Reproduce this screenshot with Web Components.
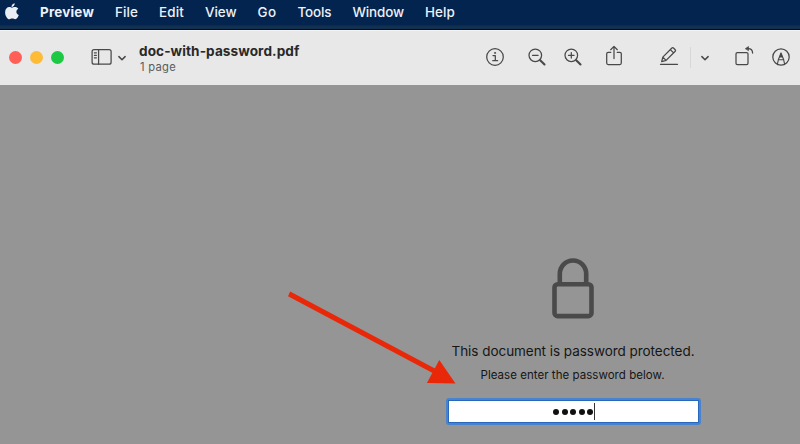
<!DOCTYPE html>
<html lang="en">
<head>
<meta charset="utf-8">
<title>Preview</title>
<style>
html,body{margin:0;height:100%;overflow:hidden;background:#959595;font-family:Inter,"Liberation Sans",sans-serif}
</style>
</head>
<body>
<preview-app></preview-app>
<script>
const define = (name, html, ready) => customElements.define(name, class extends HTMLElement {
  connectedCallback() {
    if (this.shadowRoot) return;
    const t = document.createElement('template');
    t.innerHTML = html;
    this.attachShadow({mode: 'open'}).append(t.content.cloneNode(true));
    if (ready) ready.call(this);
  }
});

/* A single-line label whose tracking is adjusted to fill the given width. */
define('fit-label', `<style>
:host{display:block;white-space:pre}
span{display:inline-block}
</style><span><slot></slot></span>`, function () {
  const w = parseFloat(this.getAttribute('w'));
  const span = this.shadowRoot.querySelector('span');
  this.style.width = w + 'px';
  const natural = span.getBoundingClientRect().width;
  span.style.letterSpacing = ((w - natural) / this.textContent.length) + 'px';
});

define('menu-bar', `<style>
:host{display:flex;box-sizing:border-box;height:30px;padding:0 0 5px 5px;background:linear-gradient(#03244f 0 25px,#12304f 26px 28.5px,#050a1c 29px 30px);color:#eef1f6;font-size:13.4px;font-weight:500;line-height:24px}
svg{width:14px;height:17px;margin:3px 21px 0 0;fill:#e9edf4}
nav{display:flex;gap:21px}
.app{font-weight:700}
</style>
<svg viewBox="0 0 14 17"><path d="M9.700.2c.2 2-1.400 3.700-3.200 3.700C6.300 2.100 7.800.400 9.700.200ZM6.900 4.700C7.700 4.700 8.500 4 9.900 4c1.500 0 2.700.7 3.400 1.700-2.900 1.700-2.300 5.200.5 6.300-.5 1.500-1.900 4.200-3.600 4.200-1.100 0-1.600-.7-2.900-.7s-1.900.7-2.900.7C2.300 16.200.1 12.600.1 9.400c0-3.400 2-5.300 4.200-5.300 1.200 0 2 .6 2.600.6Z"/></svg>
<nav>
<fit-label class="app" w="54">Preview</fit-label>
<fit-label w="23">File</fit-label>
<fit-label w="25">Edit</fit-label>
<fit-label w="31.500">View</fit-label>
<fit-label w="19">Go</fit-label>
<fit-label w="34">Tools</fit-label>
<fit-label w="51.500">Window</fit-label>
<fit-label w="30">Help</fit-label>
</nav>`);

const icons = {
  sidebar: [22, 18, '<rect x="1.100" y="1.600" width="19" height="14.600" rx="2"/><path d="M7.600 1.600v14.600M3.400 4.800h2M3.400 7.300h2M3.400 9.800h2"/>'],
  chevron: [10, 8, '<path stroke-width="1.500" d="m1.900 2.600 3.100 3.100 3.100-3.100"/>'],
  info: [20, 20, '<circle cx="10" cy="10" r="8.300"/><path d="M8 8.600h2.300v5M7.800 13.700h4.800"/><circle cx="10" cy="5.900" r=".6" fill="currentColor" stroke-width=".7"/>'],
  minus: [20, 20, '<circle cx="8.300" cy="8.300" r="6.300"/><path d="M5.500 8.300h5.600"/><path stroke-width="2.100" d="m13.200 13.200 4.300 4.300"/>'],
  plus: [20, 20, '<circle cx="8.300" cy="8.300" r="6.300"/><path d="M5.500 8.300h5.600M8.300 5.500v5.600"/><path stroke-width="2.100" d="m13.200 13.200 4.300 4.300"/>'],
  share: [18, 22, '<path d="M5.800 7.300H3.200q-1.500 0-1.500 1.500v9.300q0 1.500 1.500 1.500h11.600q1.500 0 1.500-1.500V8.800q0-1.500-1.500-1.500h-2.600M9 13.500V1.500M5.700 4.700 9 1.400l3.300 3.300"/>'],
  pencil: [20, 22, '<path d="M1.500 19.300h17M3.800 12.100 12.900 3q.8-.8 1.600 0l1.700 1.700q.8.8 0 1.600l-9.100 9.100-4.400 1.300ZM3.800 12.100l3.300 3.300M11.300 4.600l3.300 3.300"/>'],
  rotate: [20, 22, '<rect x="2" y="7.600" width="12" height="12" rx="1.300"/><path d="M14.200 3.500q4.400 0 4.400 4.500"/><path fill="currentColor" stroke-width=".7" d="m11.600 3.500 2.900-1.900v3.800Z"/>'],
  markup: [20, 20, '<circle cx="10" cy="10" r="8.200"/><path stroke-width="1.100" d="m6.500 16.800.8-4L10 6l2.700 6.800.8 4M7.300 12.800h5.400"/><path fill="currentColor" stroke="none" d="m10 5.400 1.800 5.200H8.200Z"/>']
};
define('tool-icon', `<style>
:host{display:block;flex:none;color:#484848}
svg{display:block;fill:none;stroke:currentColor;stroke-width:1.250;stroke-linecap:round;stroke-linejoin:round}
</style><svg></svg>`, function () {
  const [w, h, body] = icons[this.getAttribute('name')];
  const svg = this.shadowRoot.querySelector('svg');
  svg.setAttribute('viewBox', `0 0 ${w} ${h}`);
  svg.setAttribute('width', w);
  svg.setAttribute('height', h);
  svg.innerHTML = body;
});

define('traffic-lights', `<style>
:host{display:flex;gap:8px}
i{width:13px;height:13px;border-radius:50%;background:#fe5f57}
i:nth-of-type(2){background:#fdbb36}
i:nth-of-type(3){background:#1cc844}
</style><i></i><i></i><i></i>`);

define('title-bar', `<style>
:host{display:flex;align-items:center;box-sizing:border-box;height:55px;padding:0 8px 2px 9px;background:#e8e8e8;border-top:1px solid #f3f3f3}
traffic-lights{margin-right:27px}
.doc{margin-left:12px;width:346px;padding-top:2px}
.name{font-size:13.600px;font-weight:650;color:#292929;line-height:17px}
.pages{font-size:11.200px;color:#5b5b5b;line-height:14px;margin-left:1px}
.rule{width:1px;height:21px;background:#d7d7d7;margin:0 9px 0 11px}
</style>
<traffic-lights></traffic-lights>
<tool-icon name="sidebar"></tool-icon>
<tool-icon name="chevron" style="margin:1px 0 0 4px"></tool-icon>
<div class="doc"><fit-label class="name" w="160.500">doc-with-password.pdf</fit-label><fit-label class="pages" w="36">1 page</fit-label></div>
<tool-icon name="info"></tool-icon>
<tool-icon name="minus" style="margin-left:22px"></tool-icon>
<tool-icon name="plus" style="margin-left:16px"></tool-icon>
<tool-icon name="share" style="margin:-2px 0 0 22px"></tool-icon>
<tool-icon name="pencil" style="margin:-2px 0 0 36px"></tool-icon>
<div class="rule"></div>
<tool-icon name="chevron" style="margin-top:1px"></tool-icon>
<tool-icon name="rotate" style="margin:-2px 0 0 24px"></tool-icon>
<tool-icon name="markup" style="margin-left:17px"></tool-icon>`);

define('password-field', `<style>
:host{display:flex;box-sizing:border-box;width:255px;height:27px;padding:3px;border-radius:3px;background:#4a82cd}
div{flex:1;display:flex;align-items:center;justify-content:center;gap:2.500px;background:#fff;box-shadow:0 0 0 1px #2767bc;padding-left:1px}
b{width:6px;height:6px;border-radius:50%;background:#111}
i{width:1px;height:17px;background:#333;margin-left:-1.500px}
</style><div><b></b><b></b><b></b><b></b><b></b><i></i></div>`);

define('password-prompt', `<style>
:host{display:flex;flex-direction:column;align-items:center;width:255px;color:#161616}
svg{display:block;fill:none;stroke:#4a4a4a;stroke-width:4.600;margin-right:1px}
.head{font-size:13.500px;line-height:18px;margin:23px 1px 0 0}
.hint{font-size:11.500px;line-height:16px;margin:7px 2px 15px 0}
</style>
<svg width="44" height="62" viewBox="0 0 44 62"><rect x="3.500" y="27.300" width="37" height="31.800" rx="3.200"/><path d="M8.800 27V17a13.200 13.500 0 0 1 26.400 0v10"/></svg>
<fit-label class="head" w="243">This document is password protected.</fit-label>
<fit-label class="hint" w="184">Please enter the password below.</fit-label>
<password-field></password-field>`);

define('pointer-arrow', `<style>
:host{position:absolute;left:286px;top:288px}
svg{display:block}
</style><svg width="172" height="100" viewBox="0 0 172 100" fill="#e92809"><path d="m4.200 3.500 145.200 77.300-2.300 4.500L2 8.200Z"/><path d="m153.300 72 16.200 23.500-28.600-.6Z"/></svg>`);

define('preview-app', `<style>
:host{display:flex;flex-direction:column;width:800px;height:444px;background:#959595}
main{flex:1;display:flex;align-items:flex-start;padding:172px 0 0 446px;box-sizing:border-box}
</style>
<menu-bar></menu-bar><title-bar></title-bar>
<main><password-prompt></password-prompt></main><pointer-arrow></pointer-arrow>`);
</script>
</body>
</html>
